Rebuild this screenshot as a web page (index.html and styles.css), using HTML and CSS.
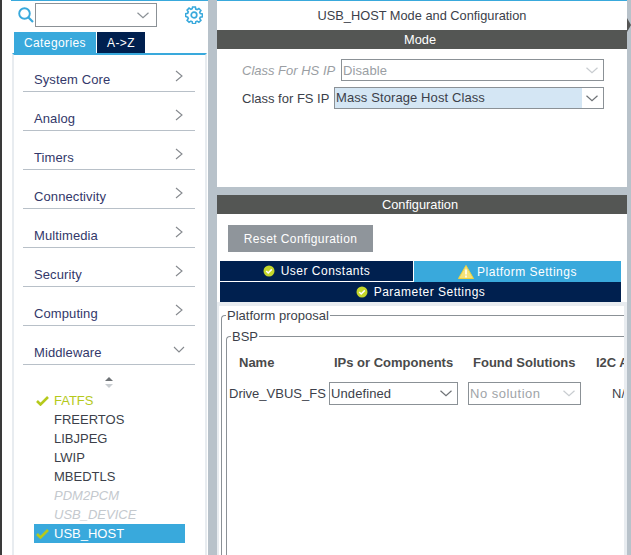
FILE: index.html
```html
<!DOCTYPE html>
<html lang="en">
<head>
<meta charset="utf-8">
<title>USB_HOST Mode and Configuration</title>
<link rel="stylesheet" href="styles.css">
</head>
<body>
<div class="app">
  <div class="edge"></div>
  <aside class="side">
    <div class="search">
      <svg class="mag" width="16" height="16" viewBox="0 0 16 16"><circle cx="6.500" cy="6.500" r="5.300" fill="none" stroke="#39a9dc" stroke-width="1.900"/><path d="M10.500 10.500 15 15" stroke="#39a9dc" stroke-width="2.200" fill="none"/></svg>
      <div class="combo">
        <svg class="chev" width="12" height="7" viewBox="0 0 12 7"><path d="M.5.800 6 5.800 11.500.800" fill="none" stroke="#8b9196" stroke-width="1.200"/></svg>
      </div>
      <svg class="gear" width="18" height="18" viewBox="0 0 18 18"><g fill="none" stroke="#39a9dc"><circle cx="9" cy="9" r="2.800" stroke-width="1.700"/><path stroke-width="1.600" d="M7.600 1h2.800l.4 2.100 1.300.6 1.800-1.200 2 2-1.200 1.800.6 1.300 2.100.4v2.800l-2.100.4-.6 1.300 1.200 1.800-2 2-1.800-1.200-1.300.6-.4 2.100H7.600l-.4-2.100-1.300-.6-1.800 1.200-2-2 1.200-1.800-.6-1.300L.6 10.400V7.600l2.100-.4.6-1.300-1.200-1.800 2-2 1.800 1.200 1.300-.6z"/></g></svg>
    </div>
    <div class="tabs">
      <div class="tab on">Categories</div>
      <div class="tab off">A-&gt;Z</div>
    </div>
    <div class="cats">
      <div class="cat"><span>System Core</span><svg class="arr" width="8" height="12" viewBox="0 0 8 12"><path d="M1 1l6 5-6 5" fill="none" stroke="#85898e" stroke-width="1.100"/></svg></div>
      <div class="cat"><span>Analog</span><svg class="arr" width="8" height="12" viewBox="0 0 8 12"><path d="M1 1l6 5-6 5" fill="none" stroke="#85898e" stroke-width="1.100"/></svg></div>
      <div class="cat"><span>Timers</span><svg class="arr" width="8" height="12" viewBox="0 0 8 12"><path d="M1 1l6 5-6 5" fill="none" stroke="#85898e" stroke-width="1.100"/></svg></div>
      <div class="cat"><span>Connectivity</span><svg class="arr" width="8" height="12" viewBox="0 0 8 12"><path d="M1 1l6 5-6 5" fill="none" stroke="#85898e" stroke-width="1.100"/></svg></div>
      <div class="cat"><span>Multimedia</span><svg class="arr" width="8" height="12" viewBox="0 0 8 12"><path d="M1 1l6 5-6 5" fill="none" stroke="#85898e" stroke-width="1.100"/></svg></div>
      <div class="cat"><span>Security</span><svg class="arr" width="8" height="12" viewBox="0 0 8 12"><path d="M1 1l6 5-6 5" fill="none" stroke="#85898e" stroke-width="1.100"/></svg></div>
      <div class="cat"><span>Computing</span><svg class="arr" width="8" height="12" viewBox="0 0 8 12"><path d="M1 1l6 5-6 5" fill="none" stroke="#85898e" stroke-width="1.100"/></svg></div>
      <div class="cat open"><span>Middleware</span><svg class="arr" width="12" height="8" viewBox="0 0 12 8"><path d="M1 1l5 5 5-5" fill="none" stroke="#85898e" stroke-width="1.100"/></svg></div>
      <div class="sort"><svg width="10" height="11" viewBox="0 0 10 11"><path d="M5 0l4 4H1z" fill="#6e7276"/><path d="M1 7h8l-4 4z" fill="#c9cdd1"/></svg></div>
      <ul class="subs">
        <li class="sub done"><svg class="tick" width="13" height="10" viewBox="0 0 13 10"><path d="M1 5l3.500 3.500L12 1" fill="none" stroke="#b5c91c" stroke-width="2.600"/></svg>FATFS</li>
        <li class="sub">FREERTOS</li>
        <li class="sub">LIBJPEG</li>
        <li class="sub">LWIP</li>
        <li class="sub">MBEDTLS</li>
        <li class="sub dis">PDM2PCM</li>
        <li class="sub dis">USB_DEVICE</li>
        <li class="sub sel"><svg class="tick" width="13" height="10" viewBox="0 0 13 10"><path d="M1 5l3.500 3.500L12 1" fill="none" stroke="#b5c91c" stroke-width="2.600"/></svg>USB_HOST</li>
      </ul>
    </div>
  </aside>
  <main class="main">
    <section class="mode">
      <h1 class="title">USB_HOST Mode and Configuration</h1>
      <h2 class="bar">Mode</h2>
      <div class="mode-row hs">
        <label class="hs-label">Class For HS IP</label>
        <div class="sel-box hs-box"><span class="val">Disable</span><svg width="12" height="7" viewBox="0 0 12 7"><path d="M.5.800 6 5.800 11.500.800" fill="none" stroke="#c8ccd0" stroke-width="1.200"/></svg></div>
      </div>
      <div class="mode-row fs">
        <label class="fs-label">Class for FS IP</label>
        <div class="sel-box fs-box"><span class="val hl">Mass Storage Host Class</span><svg width="12" height="7" viewBox="0 0 12 7"><path d="M.5.800 6 5.800 11.500.800" fill="none" stroke="#6e7276" stroke-width="1.200"/></svg></div>
      </div>
    </section>
    <section class="config">
      <h2 class="bar">Configuration</h2>
      <div class="config-body">
        <button class="reset">Reset Configuration</button>
        <div class="ctabs">
          <div class="ctab uc"><svg class="ok" width="12" height="12" viewBox="0 0 12 12"><circle cx="6" cy="6" r="5.500" fill="#c4d62a"/><path d="M3.200 6l2 2 3.600-3.600" fill="none" stroke="#fff" stroke-width="1.500"/></svg>User Constants</div>
          <div class="ctab ps"><svg class="warn" width="16" height="14" viewBox="0 0 16 14"><path d="M8 .5 15.500 13.500H.5z" fill="#f5e27a" stroke="#f0d23c"/><path d="M8 4.500v5M8 10.500v2" stroke="#fff" stroke-width="1.600"/></svg>Platform Settings</div>
          <div class="ctab pa"><svg class="ok" width="12" height="12" viewBox="0 0 12 12"><circle cx="6" cy="6" r="5.500" fill="#c4d62a"/><path d="M3.200 6l2 2 3.600-3.600" fill="none" stroke="#fff" stroke-width="1.500"/></svg>Parameter Settings</div>
        </div>
        <div class="panel">
          <fieldset class="fset outer">
            <legend>Platform proposal</legend>
            <fieldset class="fset inner">
              <legend>BSP</legend>
              <div class="grid">
                <b class="h-name">Name</b>
                <b class="h-ips">IPs or Components</b>
                <b class="h-found">Found Solutions</b>
                <b class="h-i2c">I2C Address</b>
                <span class="c-name">Drive_VBUS_FS</span>
                <div class="sel-box c-ips"><span class="val">Undefined</span><svg width="12" height="7" viewBox="0 0 12 7"><path d="M.5.800 6 5.800 11.500.800" fill="none" stroke="#6e7276" stroke-width="1.200"/></svg></div>
                <div class="sel-box c-found"><span class="val muted">No solution</span><svg width="12" height="7" viewBox="0 0 12 7"><path d="M.5.800 6 5.800 11.500.800" fill="none" stroke="#c8ccd0" stroke-width="1.200"/></svg></div>
                <span class="c-i2c">N/A</span>
              </div>
            </fieldset>
          </fieldset>
        </div>
      </div>
    </section>
  </main>
  <div class="scroll"><i class="tri"></i></div>
</div>
</body>
</html>
```

FILE: styles.css
```css
* { box-sizing: border-box; }
html, body { margin: 0; padding: 0; height: 100%; }
html { background: #b8c2ca; }
body { font-family: "Liberation Sans", Arial, sans-serif; font-size: 13px; color: #3c3f4a; overflow: hidden; }
.app { display: flex; width: 631px; height: 555px; overflow: hidden; background: #b8c2ca; }
.edge { width: 11px; flex: none; background: linear-gradient(90deg, #3a3a3a 0 2px, #fff 2px); }

.side { width: 197px; flex: none; border-top: 1px solid #39a9dc; display: flex; flex-direction: column; background: #fff; }
.search { height: 31px; flex: none; display: flex; align-items: flex-start; }
.mag { margin: 6px 0 0 7px; flex: none; }
.combo { width: 122px; height: 24px; margin: 2px 0 0 1px; border: 1px solid #8b9196; display: flex; align-items: center; justify-content: flex-end; padding-right: 7px; }
.gear { margin: 5px 0 0 28px; flex: none; }
.tabs { display: flex; flex: none; height: 21px; margin-left: 3px; gap: 1px; }
.tab { color: #fff; display: flex; align-items: center; justify-content: center; letter-spacing: .4px; font-size: 12px; }
.tab.on { width: 82px; background: #39a9dc; }
.tab.off { width: 48px; background: #00204f; }
.cats { flex: 1; margin-left: 1px; width: 195px; border-top: 2px solid #39a9dc; border-left: 2px solid #e8ecf0; border-right: 2px solid #e8ecf0; padding: 0 10px 0 9px; }
.cat { height: 39px; flex: none; border-bottom: 1px solid #b8c0c8; display: flex; justify-content: space-between; align-items: flex-end; padding: 0 12px 4px 11px; color: #33386a; letter-spacing: .1px; }
.cat:first-child { height: 37px; }
.arr { margin-bottom: 5px; }
.open .arr { margin-bottom: 6px; margin-right: -2px; }
.sort { height: 11px; margin-top: 12px; display: flex; justify-content: center; }
.subs { list-style: none; margin: 3px 0 0 11px; padding: 0; width: 151px; }
.sub { height: 19px; line-height: 19px; padding-left: 20px; position: relative; color: #3c3f4a; }
.tick { position: absolute; left: 2px; top: 5px; }
.done { color: #b5c91c; }
.dis { color: #c4c9ce; font-style: italic; }
.sel { background: #39a9dc; color: #fff; }

.main { width: 410px; margin-left: 9px; flex: none; display: flex; flex-direction: column; gap: 8px; }
.mode { height: 187px; flex: none; background: #fff; border-top: 1px solid #39a9dc; }
.title { margin: 0; height: 29px; font-size: 12.800px; font-weight: 400; text-align: center; line-height: 29px; color: #3c3f4a; }
.bar { margin: 0; height: 19px; padding-right: 4px; background: #545654; color: #fff; font-size: 12.800px; font-weight: 400; text-align: center; line-height: 19px; flex: none; }
.mode-row { display: flex; align-items: center; height: 22px; padding-left: 25px; white-space: nowrap; }
.hs { margin-top: 10px; }
.fs { margin-top: 6px; }
.hs-label { width: 99px; color: #9a9ea3; font-style: italic; }
.fs-label { width: 92px; }
.sel-box { border: 1px solid #8b9196; display: flex; align-items: center; justify-content: space-between; height: 22px; padding-right: 5px; background: #fff; }
.hs-box { width: 263px; color: #9a9ea3; }
.fs-box { width: 270px; }
.val { padding-left: 1px; letter-spacing: .1px; }
.hl { width: 247px; background: #d4e6f4; align-self: stretch; line-height: 20px; color: #3c3f4a; }
.muted { color: #a0a4a8; letter-spacing: .5px; }

.config { flex: 1; min-height: 0; background: #fff; display: flex; flex-direction: column; }
.config-body { flex: 1; display: flex; flex-direction: column; min-height: 0; }
.reset { width: 145px; height: 27px; flex: none; margin: 11px 0 0 11px; border: 0; background: #8f959b; color: #fff; font: 12px "Liberation Sans", Arial, sans-serif; letter-spacing: .4px; padding: 0; }
.ctabs { display: grid; grid-template-columns: 193px 208px; flex: none; margin: 9px 0 0 3px; width: 401px; }
.ctab { height: 20px; background: #00204f; color: #fff; font-size: 12px; letter-spacing: .5px; display: flex; align-items: center; justify-content: center; gap: 6px; }
.ps { background: #39a9dc; height: 21px; margin-left: 1px; gap: 3px; }
.uc { border-bottom: 1px solid #fff; height: 21px; }
.pa { grid-column: 1 / 3; }
.panel { flex: 1; min-height: 0; overflow: hidden; border-style: solid; border-color: #e8ecf0; border-width: 4px 3px 0 2px; padding: 2px 0 0 2px; background: #fff; }
.fset { margin: 0; padding: 0; border: 1px solid #8b9196; border-right: 0; border-bottom: 0; border-top-left-radius: 4px; min-width: 0; width: 600px; height: 300px; }
.fset legend { padding: 0 1px; margin-left: 4px; line-height: 15px; color: #3c3f4a; font-size: 13px; }
.inner { margin: 6px 0 0 4px; }
.grid { display: grid; grid-template-columns: 100px 139px 128px 100px; grid-template-rows: 22px 23px; row-gap: 9px; margin-left: 2px; padding-top: 7px; align-items: center; width: 480px; }
.grid b { font-size: 13px; color: #4a4a4a; white-space: nowrap; }
.h-name { padding-left: 10px; }
.h-ips, .h-found { padding-left: 5px; }
.c-name { white-space: nowrap; }
.c-ips { width: 129px; height: 23px; }
.c-found { width: 113px; height: 23px; }
.c-i2c { padding-left: 16px; }
.scroll { width: 4px; flex: none; background: #b8c2ca; }
.tri { display: block; width: 0; height: 0; margin-top: 18px; border-top: 7px solid transparent; border-bottom: 7px solid transparent; border-left: 4px solid #555; }
```
